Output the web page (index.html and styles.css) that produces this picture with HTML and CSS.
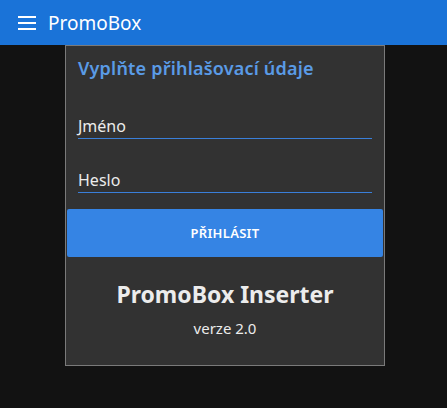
FILE: index.html
```html
<!DOCTYPE html>
<html lang="cs">
<head>
<meta charset="utf-8">
<title>PromoBox</title>
<link rel="stylesheet" href="styles.css">
</head>
<body>
<header class="appbar">
  <svg class="menu-icon" width="18" height="14" viewBox="0 0 18 14" aria-hidden="true">
    <rect x="0" y="0" width="18" height="2" fill="#fff"/>
    <rect x="0" y="6" width="18" height="2" fill="#fff"/>
    <rect x="0" y="12" width="18" height="2" fill="#fff"/>
  </svg>
  <span class="appbar-title">PromoBox</span>
</header>
<main class="card">
  <h2 class="card-title">Vyplňte přihlašovací údaje</h2>
  <div class="field"><span class="field-label">Jméno</span></div>
  <div class="field"><span class="field-label">Heslo</span></div>
  <button class="login-btn">PŘIHLÁSIT</button>
  <div class="about">
    <div class="about-name">PromoBox Inserter</div>
    <div class="about-version">verze 2.0</div>
  </div>
</main>
</body>
</html>
```
FILE: styles.css
```css
html, body {
  margin: 0;
  padding: 0;
  background: #121212;
  font-family: "Noto Sans", "Open Sans", sans-serif;
}
.appbar {
  height: 45px;
  background: #1a73d8;
  display: flex;
  align-items: center;
  padding-left: 18px;
  gap: 12px;
  color: #fff;
}
.menu-icon { display: block; margin-top: 1px; }
.appbar-title {
  font-size: 19px;
  line-height: 24px;
}
.card {
  box-sizing: border-box;
  width: 320px;
  margin-left: 65px;
  background: #323232;
  border: 1px solid #7a7a7a;
  height: 321px;
  display: flex;
  flex-direction: column;
}
.card-title {
  margin: 0;
  padding: 10px 12px 0;
  font-size: 18px;
  line-height: 24px;
  font-weight: 600;
  letter-spacing: 0.2px;
  color: #5a9be6;
}
.field {
  margin: 0 12px;
  border-bottom: 1px solid #3a7fd9;
  height: 30px;
  display: flex;
  align-items: flex-end;
}
.card-title + .field { margin-top: 28px; }
.field + .field { margin-top: 23px; }
.field-label {
  font-size: 16px;
  line-height: 20px;
  color: #ececec;
  padding-bottom: 2px;
}
.login-btn {
  margin: 16px 1px 0;
  height: 48px;
  border: 0;
  border-radius: 2px;
  background: #3584e4;
  color: #fff;
  font-family: inherit;
  font-size: 13px;
  font-weight: 600;
  letter-spacing: 0.3px;
}
.about {
  text-align: center;
  color: #ececec;
  padding-top: 22px;
}
.about-name {
  font-size: 23px;
  line-height: 30px;
  font-weight: 700;
}
.about-version {
  font-size: 15px;
  line-height: 20px;
  margin-top: 9px;
}
```
